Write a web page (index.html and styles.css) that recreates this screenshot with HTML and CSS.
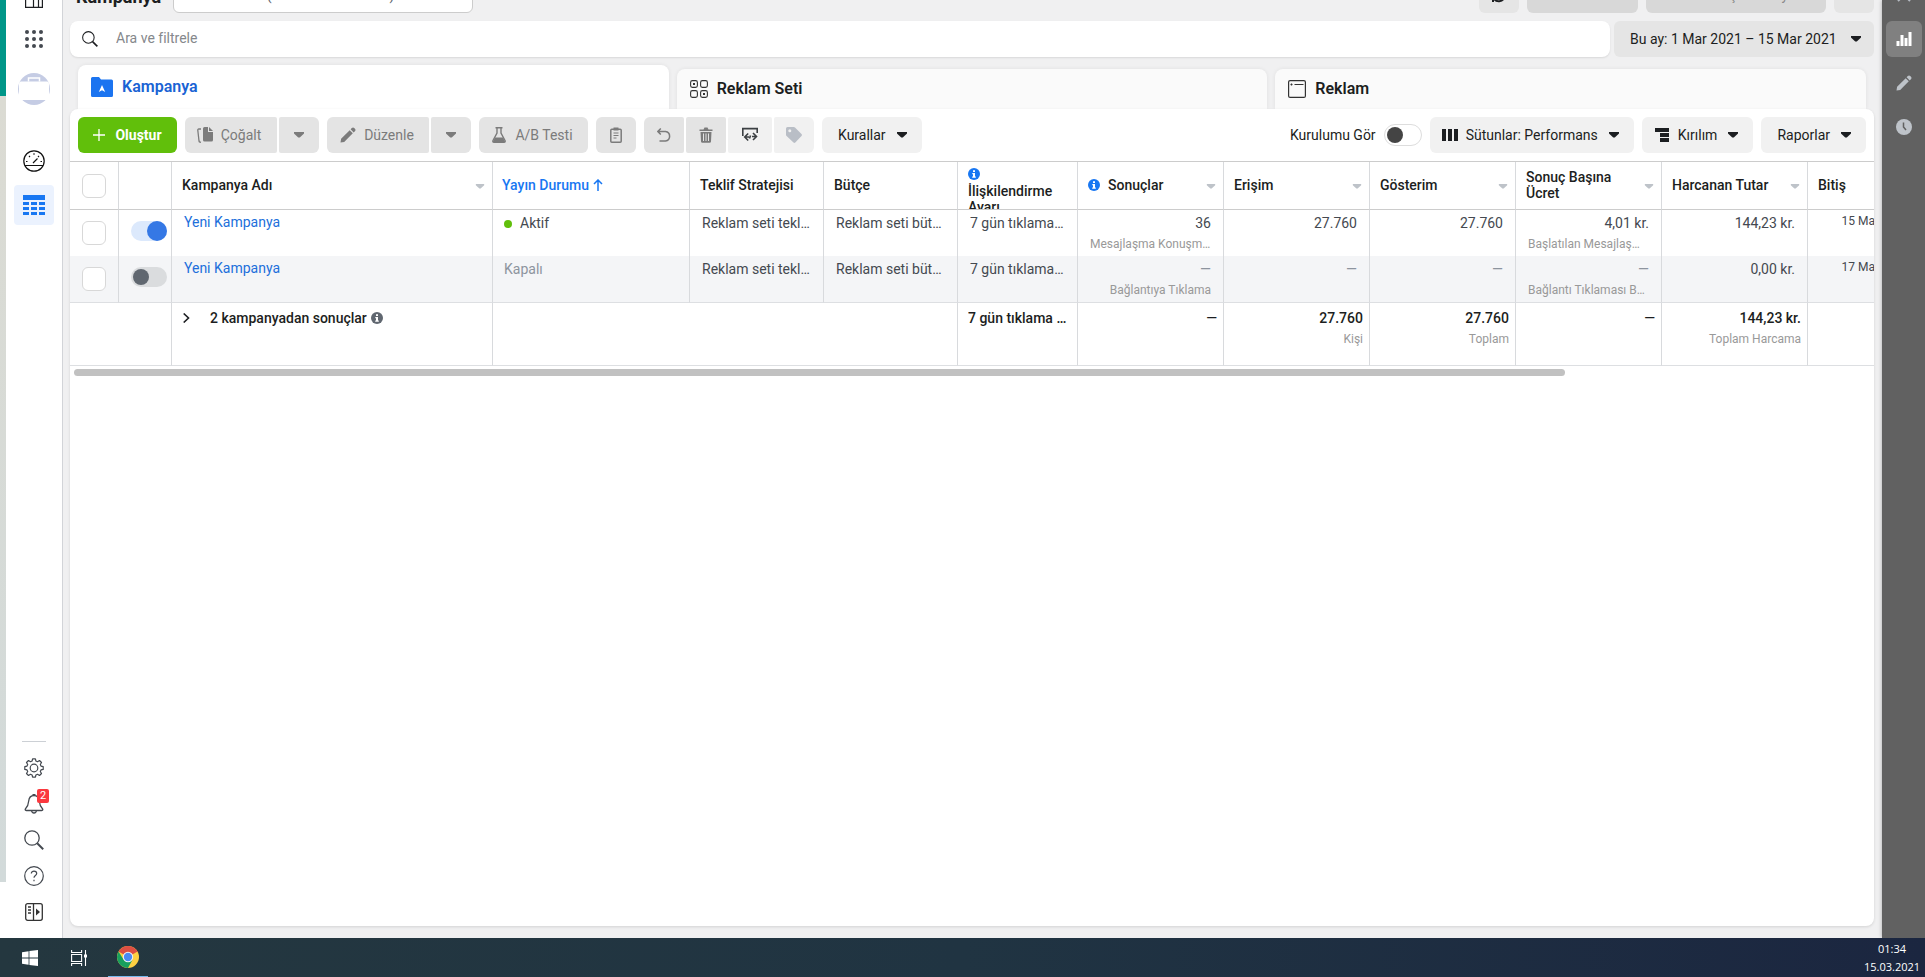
FILE: index.html
```html
<!DOCTYPE html>
<html lang="tr">
<head>
<meta charset="utf-8">
<title>Reklam Yöneticisi</title>
<link rel="stylesheet" href="styles.css">
</head>
<body>
<svg class="sprite" width="0" height="0" aria-hidden="true">
  <symbol id="caret" viewBox="0 0 12 8"><path d="M1 1h10v1.500L6.800 6.500h-1.600L1 2.500z" fill="currentColor"/></symbol>
  <symbol id="info" viewBox="0 0 12 12"><circle cx="6" cy="6" r="6" fill="currentColor"/><path d="M5 2.200h2v1.800H5zM4.300 5H7v3.500h.8v1.200H4.200V8.500H5V6.200h-.7z" fill="#fff"/></symbol>
  <symbol id="search" viewBox="0 0 20 20"><circle cx="8" cy="8" r="7.200" fill="none" stroke="currentColor" stroke-width="1.300"/><path d="M13.200 13.200l6 6" stroke="currentColor" stroke-width="2"/></symbol>
  <symbol id="pencil" viewBox="0 0 16 16"><path d="M.5 15.500l.6-3.700 8.600-8.600 3.100 3.100-8.600 8.600zM10.600 2.300l1.200-1.200c.8-.8 1.700-.8 2.500 0l.6.6c.8.8.8 1.700 0 2.500l-1.200 1.200z" fill="currentColor"/></symbol>
</svg>

<div class="desktop">
  <div class="edge"><span class="edge-teal"></span><span class="edge-gray"></span></div>

  <nav class="sidebar">
    <button class="side-btn side-first" aria-label="Ana sayfa"><svg width="18" height="18" viewBox="0 0 18 18" fill="none" stroke="#1c1e21" stroke-width="1.200"><path d="M.6.6h16.800v16.800H.6zM.6 5h16.800M8.500 5v12.400M13.500 5v12.400"/></svg></button>
    <button class="side-btn" aria-label="Tüm araçlar"><svg width="18" height="18" viewBox="0 0 18 18" fill="#444950"><circle cx="2" cy="2" r="2"/><circle cx="9" cy="2" r="2"/><circle cx="16" cy="2" r="2"/><circle cx="2" cy="9" r="2"/><circle cx="9" cy="9" r="2"/><circle cx="16" cy="9" r="2"/><circle cx="2" cy="16" r="2"/><circle cx="9" cy="16" r="2"/><circle cx="16" cy="16" r="2"/></svg></button>
    <button class="side-btn side-avatar" aria-label="İşletme"><svg width="32" height="32" viewBox="0 0 32 32"><circle cx="16" cy="16" r="16" fill="#c5cce4"/><path d="M3 8.500h26q2 0 2 2V25q0 2-2 2H3q-2 0-2-2V10.500q0-2 2-2z" fill="#fff"/><path d="M10.500 8.500V5h11v3.500" fill="none" stroke="#fff" stroke-width="1.500"/></svg></button>
    <button class="side-btn side-gauge" aria-label="Genel bakış"><svg width="22" height="22" viewBox="0 0 22 22" fill="none" stroke="#111" stroke-width="1.200"><circle cx="11" cy="11" r="10.200"/><path d="M2 15.500h18M10 13l4.500-4.500"/><path d="M3 11.500h1.500M17.500 11.500H19M6 6l1 1M16 6l-1 1M11 3.200v1.500"/></svg></button>
    <button class="side-btn side-active" aria-label="Kampanyalar"><svg width="22" height="20" viewBox="0 0 22 20" fill="#1877f2"><path d="M0 0h22v5H0zM0 7h6v3H0zM8 7h6v3H8zM16 7h6v3h-6zM0 12h6v3H0zM8 12h6v3H8zM16 12h6v3h-6zM0 17h6v3H0zM8 17h6v3H8zM16 17h6v3h-6z"/></svg></button>
    <div class="side-bottom">
      <span class="side-rule"></span>
      <button class="side-btn side-tool" aria-label="Ayarlar"><svg width="20" height="20" viewBox="0 0 20 20" fill="none" stroke="#444950" stroke-width="1.200" stroke-linejoin="round"><path d="M8.600.8h2.800l.5 2.200 1.600.7 2-1.200 2 2-1.200 2 .7 1.600 2.200.5v2.800l-2.200.5-.7 1.600 1.200 2-2 2-2-1.200-1.600.7-.5 2.200H8.600l-.5-2.200-1.600-.7-2 1.200-2-2 1.200-2-.7-1.600-2.200-.5V8.600L3 8.100l.7-1.600-1.200-2 2-2 2 1.200L8.100 3z"/><circle cx="10" cy="10" r="3.800"/></svg></button>
      <button class="side-btn side-tool" aria-label="Bildirimler, 2 yeni"><svg width="20" height="20" viewBox="0 0 20 20" fill="none" stroke="#444950" stroke-width="1.300" stroke-linejoin="round"><path d="M10 1.500c-3.500 0-5 2.500-5.300 5.500-.3 3.500-1 5.500-3 7.500-.8 1-.7 2 .6 2h15.400c1.300 0 1.400-1 .6-2-2-2-2.700-4-3-7.500C15 4 13.500 1.500 10 1.500zM7.500 16.500c.2 1.700 1 2.500 2.500 2.500s2.300-.8 2.500-2.500M9 1.500V.7h2v.8"/></svg><span class="badge">2</span></button>
      <button class="side-btn side-tool" aria-label="Ara"><svg class="ink" width="20" height="20"><use href="#search"/></svg></button>
      <button class="side-btn side-tool" aria-label="Yardım"><svg width="20" height="20" viewBox="0 0 20 20" fill="none" stroke="#444950" stroke-width="1.200"><circle cx="10" cy="10" r="9.300"/><path d="M7.300 7.500c0-3.300 5.400-3.300 5.400 0 0 2-2.700 2-2.700 4.200M10 13.800v1.500"/></svg></button>
      <button class="side-btn side-tool" aria-label="Menüyü genişlet"><svg width="18" height="18" viewBox="0 0 18 18" fill="none" stroke="#333" stroke-width="1.300"><rect x=".7" y=".7" width="16.600" height="16.600" rx="2"/><path d="M8.500 1v16M3 4h3M3 7h3M3 10h3"/><path d="M11 5.500l4 3.500-4 3.500z" fill="#333" stroke="none"/></svg></button>
    </div>
  </nav>

  <main class="main">
    <header class="top-row">
      <h1 class="page-title">Kampanya</h1>
      <button class="account">Reklam Alanı (000000000000000)</button>
      <div class="top-actions">
        <button class="top-btn top-icon" aria-label="Yenile"><svg width="16" height="16" viewBox="0 0 16 16" fill="none" stroke="#1c1e21" stroke-width="2"><path d="M2.500 6a6 6 0 0 1 11-1M13.500 10a6 6 0 0 1-11 1M14 1v4.500H9.500M2 15v-4.500h4.500"/></svg></button>
        <button class="top-btn top-discard">Taslakları At</button>
        <button class="top-btn top-publish">Gözden Geçir ve Yayınla</button>
        <button class="top-btn top-icon" aria-label="Diğer"></button>
      </div>
    </header>

    <div class="search-row">
      <label class="search"><svg width="16" height="16"><use href="#search"/></svg><input class="search-input" type="text" placeholder="Ara ve filtrele" aria-label="Ara ve filtrele"></label>
      <button class="date">Bu ay: 1 Mar 2021 – 15 Mar 2021<svg class="caret" width="12" height="8"><use href="#caret"/></svg></button>
    </div>

    <div class="tabs" role="tablist">
      <button class="tab tab-on" role="tab"><svg width="22" height="20" viewBox="0 0 22 20"><path d="M1.500 0H8l2 2.500h10.500q1.500 0 1.500 1.500v14.500q0 1.500-1.500 1.500h-19Q0 20 0 18.500v-17Q0 0 1.500 0z" fill="#1b74f0"/><path d="M11 8l3.200 7L11 13.200 7.800 15z" fill="#fff"/></svg>Kampanya</button>
      <button class="tab" role="tab"><svg width="18" height="18" viewBox="0 0 18 18" fill="none" stroke="#333" stroke-width="1.100"><rect x=".6" y=".6" width="6.800" height="6.800" rx="1.800"/><rect x="10.600" y=".6" width="6.800" height="6.800" rx="1.800"/><rect x=".6" y="10.600" width="6.800" height="6.800" rx="1.800"/><rect x="10.600" y="10.600" width="6.800" height="6.800" rx="1.800"/><path d="M3 3h2v2H3zM13 13h2v2h-2z" fill="#333" stroke="none"/></svg>Reklam Seti</button>
      <button class="tab" role="tab"><svg width="18" height="18" viewBox="0 0 18 18" fill="none" stroke="#333" stroke-width="1.200"><rect x=".6" y=".6" width="16.800" height="16.800" rx="1.500"/><path d="M2.500 4.500h2M6.500 4.500h9M3.500 3.500v2"/></svg>Reklam</button>
    </div>

    <section class="panel">
      <div class="toolbar">
        <button class="btn create"><svg width="12" height="12" viewBox="0 0 12 12" stroke="#fff" stroke-width="1.300"><path d="M6 0v12M0 6h12"/></svg>Oluştur</button>
        <div class="group">
          <button class="btn off copy"><svg width="16" height="16" viewBox="0 0 16 16"><path d="M7.500 0H11v5h5v8q0 1.500-1.500 1.500h-7Q6 14.500 6 13V1.500Q6 0 7.500 0zM12 0l4 4h-4z" fill="#7b7b7b"/><path d="M4 2H1.800Q.7 2 .8 3.200L2 14q.2 1 1.200 1.200l.8.2" fill="none" stroke="#7b7b7b" stroke-width="1.300"/></svg>Çoğalt</button>
          <button class="btn off drop" aria-label="Çoğaltma seçenekleri"><svg class="caret" width="12" height="8"><use href="#caret"/></svg></button>
        </div>
        <div class="group">
          <button class="btn off edit"><svg width="16" height="16"><use href="#pencil"/></svg>Düzenle</button>
          <button class="btn off drop" aria-label="Düzenleme seçenekleri"><svg class="caret" width="12" height="8"><use href="#caret"/></svg></button>
        </div>
        <button class="btn off abtest"><svg width="14" height="16" viewBox="0 0 14 16"><path d="M3.500.7h7M5 1v5L1 13.500q-.6 1.700 1 1.700h10q1.600 0 1-1.700L9 6V1" fill="none" stroke="#7b7b7b" stroke-width="1.400"/><path d="M3 10.500h8l2.200 4.500H.8z" fill="#7b7b7b"/></svg>A/B Testi</button>
        <button class="btn off square" aria-label="Pano"><svg width="12" height="16" viewBox="0 0 12 16" fill="none" stroke="#7b7b7b"><rect x=".8" y="2.300" width="10.400" height="12.900" rx="1" stroke-width="1.500"/><path d="M3.500.5h5v3h-5z" fill="#7b7b7b" stroke="none"/><path d="M3.500 6h5M3.500 8.500h5M3.500 11h3"/></svg></button>
        <div class="group">
          <button class="btn off square" aria-label="Geri al"><svg width="14" height="14" viewBox="0 0 14 14" fill="none" stroke="#7b7b7b" stroke-width="1.500"><path d="M1 3.500h7.500a4.800 4.800 0 0 1 0 9.500H2.500M3.800.5L.9 3.500l2.900 3"/></svg></button>
          <button class="btn off square" aria-label="Sil"><svg width="14" height="16" viewBox="0 0 14 16" fill="#7b7b7b"><path d="M.5 2.500h4L5.500.5h3l1 2h4V4H.5zM1.500 5h11L12 14.500q-.1 1.300-1.400 1.300H3.400Q2.100 15.800 2 14.500z"/><path d="M4.500 6.500v7.500M7 6.500v7.500M9.500 6.500v7.500" stroke="#e4e4e4" stroke-width="1"/></svg></button>
          <button class="btn compare" aria-label="Karşılaştır"><svg width="16" height="16" viewBox="0 0 16 16" fill="none" stroke="#3c4043" stroke-width="1.600"><path d="M.8 9V1.600h14.400V6"/><path d="M6.200 6.500L2.700 10l3.500 3.500M11 6l3.500 3.500L11 13M3 10h4M10 9.500h4M8.500 8.500l-1 3"/></svg></button>
          <button class="btn square tag" aria-label="Etiket"><svg width="16" height="16" viewBox="0 0 16 16"><path d="M1.500 0h6.200q.8 0 1.300.6l6.500 6.500q.9.900 0 1.800l-6.200 6.600q-.9.900-1.800 0L.6 9Q0 8.500 0 7.700V1.500Q0 0 1.500 0z" fill="#b9bec6"/><circle cx="3.800" cy="3.800" r="1.500" fill="#f1f1f1"/></svg></button>
        </div>
        <button class="btn menu">Kurallar<svg class="caret" width="12" height="8"><use href="#caret"/></svg></button>
        <div class="toolbar-right">
          <label class="setup">Kurulumu Gör<input class="switch switch-outline" type="checkbox"></label>
          <button class="btn with-icon"><svg width="16" height="12" viewBox="0 0 16 12" fill="#1c1e21"><path d="M0 0h4v12H0zM6 0h4v12H6zM12 0h4v12h-4z"/></svg>Sütunlar: Performans<svg class="caret" width="12" height="8"><use href="#caret"/></svg></button>
          <button class="btn with-icon"><svg width="16" height="14" viewBox="0 0 16 14" fill="#1c1e21"><path d="M1 0h14v4H1zM6 5h9v4H6zM6 10h9v4H6z"/></svg>Kırılım<svg class="caret" width="12" height="8"><use href="#caret"/></svg></button>
          <button class="btn menu">Raporlar<svg class="caret" width="12" height="8"><use href="#caret"/></svg></button>
        </div>
      </div>

      <div class="table-wrap">
        <table class="grid">
          <colgroup><col class="c-check"><col class="c-switch"><col class="c-name"><col class="c-status"><col class="c-mid"><col class="c-mid"><col class="c-attr"><col class="c-num"><col class="c-num"><col class="c-num"><col class="c-num"><col class="c-num"><col class="c-end"></colgroup>
          <thead>
            <tr>
              <th class="pick"><input class="check" type="checkbox" aria-label="Tümünü seç"></th>
              <th></th>
              <th><div class="head"><span>Kampanya Adı</span><svg class="sort" width="10" height="7"><use href="#caret"/></svg></div></th>
              <th><div class="head sorted"><span>Yayın Durumu</span><svg width="10" height="12" viewBox="0 0 10 12" fill="none" stroke="currentColor" stroke-width="1.500"><path d="M5 12V1M1 5l4-4 4 4"/></svg></div></th>
              <th><div class="head">Teklif Stratejisi</div></th>
              <th><div class="head">Bütçe</div></th>
              <th><div class="head head-stack"><svg class="blue" width="12" height="12"><use href="#info"/></svg><span>İlişkilendirme Ayarı</span></div></th>
              <th><div class="head"><svg class="blue lead" width="12" height="12"><use href="#info"/></svg><span>Sonuçlar</span><svg class="sort" width="10" height="7"><use href="#caret"/></svg></div></th>
              <th><div class="head"><span>Erişim</span><svg class="sort" width="10" height="7"><use href="#caret"/></svg></div></th>
              <th><div class="head"><span>Gösterim</span><svg class="sort" width="10" height="7"><use href="#caret"/></svg></div></th>
              <th><div class="head"><span>Sonuç Başına Ücret</span><svg class="sort" width="10" height="7"><use href="#caret"/></svg></div></th>
              <th><div class="head"><span>Harcanan Tutar</span><svg class="sort" width="10" height="7"><use href="#caret"/></svg></div></th>
              <th><div class="head">Bitiş</div></th>
            </tr>
          </thead>
          <tbody>
            <tr>
              <td class="pick"><input class="check" type="checkbox" aria-label="Yeni Kampanya seç"></td>
              <td class="pick"><input class="switch" type="checkbox" checked aria-label="Yeni Kampanya açık"></td>
              <td class="name"><a class="link" href="#">Yeni Kampanya</a></td>
              <td class="status"><span class="dot"></span>Aktif</td>
              <td><div class="clip">Reklam seti teklifi</div></td>
              <td><div class="clip">Reklam seti bütçesi</div></td>
              <td><div class="clip">7 gün tıklama veya</div></td>
              <td class="num"><div>36</div><div class="sub">Mesajlaşma Konuşmaları</div></td>
              <td class="num">27.760</td>
              <td class="num">27.760</td>
              <td class="num"><div>4,01 kr.</div><div class="sub">Başlatılan Mesajlaşmalar</div></td>
              <td class="num">144,23 kr.</td>
              <td class="end">15 Mar 2021</td>
            </tr>
            <tr class="alt">
              <td class="pick"><input class="check" type="checkbox" aria-label="Yeni Kampanya seç"></td>
              <td class="pick"><input class="switch" type="checkbox" aria-label="Yeni Kampanya kapalı"></td>
              <td class="name"><a class="link" href="#">Yeni Kampanya</a></td>
              <td class="status muted">Kapalı</td>
              <td><div class="clip">Reklam seti teklifi</div></td>
              <td><div class="clip">Reklam seti bütçesi</div></td>
              <td><div class="clip">7 gün tıklama veya</div></td>
              <td class="num muted"><div>—</div><div class="sub">Bağlantıya Tıklama</div></td>
              <td class="num muted">—</td>
              <td class="num muted">—</td>
              <td class="num muted"><div>—</div><div class="sub">Bağlantı Tıklaması Başına</div></td>
              <td class="num">0,00 kr.</td>
              <td class="end">17 Mar 2021</td>
            </tr>
          </tbody>
          <tfoot>
            <tr>
              <td colspan="2"></td>
              <td><div class="summary"><svg width="8" height="10" viewBox="0 0 8 10" fill="none" stroke="#1c1e21" stroke-width="1.600"><path d="M1.700.5L6.500 5 1.700 9.500"/></svg><span>2 kampanyadan sonuçlar</span><svg class="slate" width="12" height="12"><use href="#info"/></svg></div></td>
              <td colspan="3"></td>
              <td><div class="clip">7 gün tıklama veya</div></td>
              <td class="num">—</td>
              <td class="num"><div>27.760</div><div class="sub">Kişi</div></td>
              <td class="num"><div>27.760</div><div class="sub">Toplam</div></td>
              <td class="num">—</td>
              <td class="num"><div>144,23 kr.</div><div class="sub">Toplam Harcama</div></td>
              <td></td>
            </tr>
          </tfoot>
        </table>
      </div>
      <div class="scroll-track"><div class="scroll-thumb"></div></div>
    </section>
  </main>

  <aside class="rail">
    <button class="rail-btn rail-cut" aria-label="Kapat"><svg width="14" height="14" viewBox="0 0 14 14" stroke="#b5bac2" stroke-width="2"><path d="M1 1l12 12M13 1L1 13"/></svg></button>
    <button class="rail-btn rail-on" aria-label="Grafikler"><svg width="16" height="14" viewBox="0 0 16 14" fill="#fff"><path d="M.5 9h3v5h-3zM4.500 3h3v11h-3zM8.500 6h3v8h-3zM12.500 0h3v14h-3z"/></svg></button>
    <button class="rail-btn" aria-label="Düzenle"><svg width="16" height="16"><use href="#pencil"/></svg></button>
    <button class="rail-btn" aria-label="Geçmiş"><svg width="16" height="16" viewBox="0 0 16 16"><circle cx="8" cy="8" r="8" fill="#bec3c9"/><path d="M7.500 3.500V8l2.500 3" fill="none" stroke="#616161" stroke-width="1.500"/></svg></button>
  </aside>
</div>

<footer class="taskbar">
  <button class="task" aria-label="Başlat"><svg width="16" height="16" viewBox="0 0 16 16" fill="#fff"><path d="M0 2.200L6.600 1.200v6.300H0zM7.400 1.100L16 0v7.500H7.400zM0 8.500h6.600v6.300L0 13.800zM7.400 8.500H16V16l-8.600-1.100z"/></svg></button>
  <button class="task" aria-label="Görev görünümü"><svg width="16" height="16" viewBox="0 0 16 16" fill="none" stroke="#fff" stroke-width="1.100"><path d="M.6 4.500h10v7H.6zM.6 0v2.500h10V0M.6 16v-2.500h10V16M14.500 0v16"/><path d="M13 4.500h3v3h-3z" fill="#fff" stroke="none"/></svg></button>
  <button class="task task-on" aria-label="Chrome"><svg width="22" height="22" viewBox="0 0 22 22"><circle cx="11" cy="11" r="11" fill="#fdd042"/><path d="M11 11L1.500 5.500A11 11 0 0 1 20.500 5.500z" fill="#dd4f43"/><path d="M11 6h9.800a11 11 0 0 0-.6-1L11 4z" fill="#dd4f43"/><path d="M1.500 5.500A11 11 0 0 0 11 22l4.500-8.300L6.500 13.500z" fill="#189f5e"/><circle cx="11" cy="11" r="5.200" fill="#f3f3f3"/><circle cx="11" cy="11" r="4.200" fill="#4a8af4"/></svg></button>
  <div class="clock"><span>01:34</span><span>15.03.2021</span></div>
</footer>
</body>
</html>
```

FILE: styles.css
```css
* { box-sizing: border-box; }

body {
  margin: 0;
  height: 100vh;
  display: flex;
  flex-direction: column;
  overflow: hidden;
  font-family: Roboto, "Liberation Sans", sans-serif;
  font-size: 14px;
  line-height: 20px;
  color: #1c1e21;
  background: #fff;
}

button, input { font: inherit; color: inherit; }
button {
  display: flex;
  align-items: center;
  border: 0;
  padding: 0;
  background: none;
  white-space: nowrap;
}
svg { flex: none; display: block; }
.sprite { position: absolute; }

.desktop { flex: 1; min-height: 0; display: flex; }

/* strip of the window behind */
.edge { width: 6px; display: flex; flex-direction: column; padding-bottom: 56px; }
.edge-teal { height: 96px; background: #009688; }
.edge-gray { flex: 1; background: linear-gradient(#dbdbd3, #d2dada); }

/* left navigation */
.sidebar {
  width: 57px;
  display: flex;
  flex-direction: column;
  align-items: center;
  border-right: 1px solid #d2d4d8;
}
.side-btn { position: relative; width: 40px; height: 40px; flex: none; justify-content: center; }
.side-first { margin-top: -21px; }
.side-avatar { margin-top: 10px; }
.side-gauge { margin-top: 32px; }
.side-active { margin-top: 4px; border-radius: 4px; background: #ebf2fe; }
.side-bottom { margin-top: auto; padding-bottom: 8px; display: flex; flex-direction: column; align-items: center; }
.side-rule { width: 24px; height: 1px; margin-bottom: 8px; background: #ccd0d5; }
.side-tool { height: 36px; }
.ink { color: #444950; }
.badge {
  position: absolute;
  top: 3px;
  right: 5px;
  width: 12px;
  height: 14px;
  border-radius: 2px;
  background: #fa383e;
  color: #fff;
  font-size: 11px;
  line-height: 14px;
}

/* main column */
.main {
  flex: 1;
  min-width: 0;
  display: flex;
  flex-direction: column;
  padding: 0 8px 12px 7px;
  background: #f0f0f1;
  overflow: hidden;
}

.top-row { display: flex; align-items: center; height: 36px; margin-top: -23px; flex: none; }
.page-title { width: 103px; margin: 0; padding: 4px 0 0 6px; font-size: 18px; line-height: 24px; font-weight: 700; }
.account { width: 300px; height: 36px; padding-left: 8px; border: 1px solid #ccc; border-radius: 6px; background: #fff; color: #606770; }
.top-actions { display: flex; gap: 8px; margin-left: auto; }
.top-btn { height: 36px; border-radius: 6px; background: #d8d8d8; color: #888; justify-content: center; }
.top-icon { width: 40px; background: #e5e5e5; }
.top-discard { width: 111px; }
.top-publish { width: 180px; }

.search-row { display: flex; gap: 4px; margin-top: 8px; flex: none; }
.search {
  flex: 1;
  display: flex;
  align-items: center;
  height: 36px;
  padding: 0 12px;
  gap: 16px;
  border-radius: 8px;
  background: #fff;
  box-shadow: 0 1px 2px rgba(0, 0, 0, .1);
}
.search-input { flex: 1; padding: 0 2px 2px; border: 0; outline: 0; background: none; }
.search-input::placeholder { color: #85888c; }
.date { width: 260px; padding: 0 12px 0 16px; justify-content: space-between; border-radius: 6px; background: #e5e5e5; }

.tabs { display: flex; align-items: flex-end; gap: 8px; margin-top: 8px; padding: 0 8px; flex: none; }
.tab {
  flex: 1;
  height: 40px;
  padding-left: 13px;
  gap: 9px;
  border-radius: 8px 8px 0 0;
  background: #fafafa;
  box-shadow: 0 0 4px rgba(0, 0, 0, .07);
  font-size: 16px;
  font-weight: 600;
}
.tab-on { height: 44px; background: #fff; color: #1a63d4; }

.panel {
  position: relative;
  flex: 1;
  min-height: 0;
  border-radius: 8px;
  background: #fff;
  box-shadow: 0 1px 3px rgba(0, 0, 0, .12);
  overflow: hidden;
}

/* toolbar */
.toolbar { display: flex; gap: 8px; padding: 8px; }
.btn { height: 36px; border-radius: 6px; justify-content: center; background: #f1f1f1; }
.off { background: #e4e4e4; color: #7b7b7b; }
.create { width: 99px; gap: 10px; background: #61bf0b; color: #fff; font-weight: 700; }
.group { display: flex; gap: 2px; }
.group .btn { border-radius: 2px; }
.group .btn:first-child { border-radius: 6px 2px 2px 6px; }
.group .btn:last-child { border-radius: 2px 6px 6px 2px; }
.copy { width: 92px; gap: 8px; padding-right: 4px; }
.edit { width: 102px; gap: 8px; padding-right: 2px; }
.drop, .square { width: 40px; }
.compare { width: 44px; }
.abtest { width: 109px; gap: 9px; padding-right: 2px; }
.menu { padding: 0 14px 0 16px; gap: 10px; }
.with-icon { padding: 0 14px 0 12px; gap: 8px; }
.with-icon .caret { margin-left: 2px; }
.toolbar-right { display: flex; align-items: center; gap: 8px; margin-left: auto; }
.setup { display: flex; align-items: center; gap: 8px; }

.switch {
  appearance: none;
  display: block;
  width: 36px;
  height: 20px;
  margin: 0;
  padding: 2px;
  border-radius: 10px;
  background: #dadcde;
}
.switch::before { content: ""; display: block; width: 16px; height: 16px; border-radius: 50%; background: #606770; }
.switch:checked { padding: 0 0 0 16px; background: #dce9fc; }
.switch:checked::before { width: 20px; height: 20px; background: #3578e5; }
.switch-outline { width: 38px; height: 22px; border: 1px solid #ddd; border-radius: 11px; background: #fff; }
.switch-outline::before { background: #444; }

/* table */
.table-wrap { overflow: hidden; border-top: 1px solid #ccc; }
.grid { width: 1852px; table-layout: fixed; border-collapse: separate; border-spacing: 0; }
.c-check { width: 49px; }
.c-switch { width: 53px; }
.c-name { width: 321px; }
.c-status { width: 197px; }
.c-mid { width: 134px; }
.c-attr { width: 120px; }
.c-num { width: 146px; }
.c-end { width: 114px; }

th, td { padding: 0; border-right: 1px solid #d8dadd; vertical-align: top; text-align: left; }
th { height: 48px; border-bottom: 1px solid #ccc; font-weight: 500; line-height: 16px; }
.head { display: flex; align-items: center; height: 47px; padding: 0 7px 2px 10px; overflow: hidden; }
.head-stack { flex-direction: column; align-items: flex-start; gap: 3px; padding-top: 6px; }
.sort { margin: 3px 0 0 auto; color: #bec3c9; }
.sorted { gap: 4px; padding-left: 9px; color: #1877f2; }
.blue { color: #1877f2; }
.lead { margin-right: 8px; }

tbody td { height: 46px; padding: 3px 12px 0; color: #444950; }
tbody td.status { padding-left: 11px; }
.alt td { height: 47px; border-bottom: 1px solid #dddfe2; background: #f4f5f7; }
.alt .muted { color: #8d949e; }
td.pick, th.pick { padding: 11px 0 0 12px; }
th.pick { padding-top: 12px; }
.check {
  appearance: none;
  display: block;
  width: 24px;
  height: 24px;
  margin: 0;
  border: 1px solid #d8d8d8;
  border-radius: 6px;
  background: #fff;
}
tbody td.name { padding-top: 2px; }
.link { color: #216fdb; text-decoration: none; }
.dot { display: inline-block; width: 8px; height: 8px; margin-right: 8px; border-radius: 50%; background: #61bf0b; }
.clip, .sub { overflow: hidden; white-space: nowrap; text-overflow: ellipsis; }
.num { text-align: right; }
.sub { padding-top: 1px; font-size: 12px; font-weight: 400; color: #999; }
tbody td.end { padding-top: 1px; font-size: 12px; text-align: right; white-space: nowrap; }

tfoot td { height: 63px; padding: 5px 6px 0 10px; border-bottom: 1px solid #dddfe2; font-weight: 500; }
.summary { display: flex; align-items: center; }
.summary span { margin: 0 4px 0 20px; }
.slate { color: #606770; }

.scroll-track { padding: 3px 4px; }
.scroll-thumb { width: 83%; height: 7px; border-radius: 4px; background: #c1c1c1; }

/* right rail */
.rail {
  width: 43px;
  display: flex;
  flex-direction: column;
  align-items: center;
  gap: 8px;
  padding-left: 1px;
  background: #616161;
  box-shadow: 0 0 4px rgba(0, 0, 0, .3);
  overflow: hidden;
}
.rail-btn { width: 36px; height: 36px; border-radius: 6px; justify-content: center; color: #bec3c9; flex: none; }
.rail-cut { margin-top: -23px; }
.rail-on { background: #808080; }

/* taskbar */
.taskbar {
  flex: none;
  display: flex;
  height: 39px;
  padding-left: 10px;
  background: linear-gradient(90deg, #24373f, #203442 50%, #1b2640);
  color: #fff;
  font-family: "Open Sans", "Noto Sans", sans-serif;
  font-size: 11px;
  line-height: 18px;
}
.task { width: 40px; margin-right: 9px; justify-content: center; }
.task-on { border-bottom: 1px solid #76b9ed; }
.clock { display: flex; flex-direction: column; align-items: center; width: 66px; padding-top: 2px; margin-left: auto; }
```
